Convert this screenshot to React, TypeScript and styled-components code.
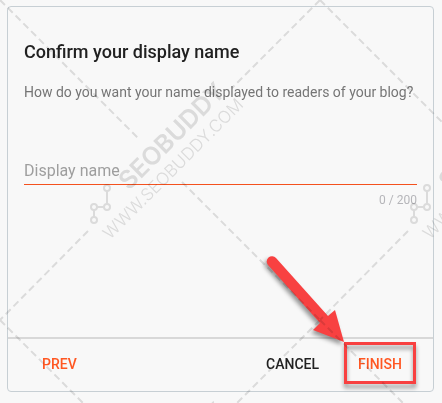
import React, { useState } from 'react';
import styled, { createGlobalStyle } from 'styled-components';

const GlobalStyle = createGlobalStyle`
  *, *::before, *::after { box-sizing: border-box; }
  body {
    margin: 0;
    background: #f8f8f8;
    font-family: Roboto, "Liberation Sans", sans-serif;
  }
`;

const Page = styled.main`
  position: relative;
  display: flex;
  min-height: 100vh;
  padding: 6px 8px 11px 7px;
  overflow: hidden;
`;

const Card = styled.form`
  display: flex;
  flex: 1;
  flex-direction: column;
  border: 1px solid #c7cfd4;
  border-radius: 4px;
`;

const Content = styled.div`
  flex: 1;
  padding: 32px 16px;
`;

const Title = styled.h1`
  margin: 0;
  color: #212121;
  font-size: 18px;
  font-weight: 500;
  line-height: 26px;
`;

const Prompt = styled.p`
  margin: 17px 0 0;
  color: #757575;
  font-size: 14px;
  line-height: 20px;
`;

const Field = styled.div`
  margin-top: 55px;
`;

const NameInput = styled.input`
  display: block;
  width: 100%;
  height: 28px;
  padding: 0;
  border: 0;
  border-bottom: 1px solid #f4511e;
  border-radius: 0;
  outline: none;
  background: transparent;
  color: #212121;
  font: 400 16px/24px Roboto, "Liberation Sans", sans-serif;

  &::placeholder { color: #9e9e9e; opacity: 1; }
`;

const Counter = styled.div`
  margin-top: 7px;
  color: #b5b5b9;
  font-size: 12px;
  line-height: 16px;
  text-align: right;
`;

const Footer = styled.footer`
  display: flex;
  align-items: flex-start;
  height: 54px;
  padding: 3px 17px 0;
  border-top: 2px solid #d8d8d8;
`;

const Action = styled.button<{ $accent?: boolean; $compact?: boolean }>`
  position: relative;
  height: 42px;
  padding: ${({ $compact }) => ($compact ? '2px 14px 0' : '2px 17px 0')};
  border: 0;
  background: transparent;
  color: ${({ $accent }) => ($accent ? '#ff5722' : '#212121')};
  font: 500 14px/20px Roboto, "Liberation Sans", sans-serif;
  cursor: pointer;
`;

const Spacer = styled.div`
  flex: 1;
`;

const Highlight = styled.span`
  position: absolute;
  inset: 0;
  border: 3px solid #f84141;
  filter: drop-shadow(0 4px 2px rgba(0, 0, 0, 0.4));
`;

const Arrow = styled.svg`
  position: absolute;
  right: 100%;
  bottom: 100%;
  width: 84px;
  height: 90px;
  overflow: visible;
  filter: drop-shadow(-2px 3px 2px rgba(0, 0, 0, 0.4));
  pointer-events: none;
`;

const FinishGroup = styled.div`
  position: relative;
  margin-left: 8px;
`;

const WatermarkLayer = styled.svg`
  position: absolute;
  inset: 0;
  width: 100%;
  height: 100%;
  color: #e2e2e2;
  mix-blend-mode: multiply;
  pointer-events: none;
`;

function Watermark() {
  return (
    <WatermarkLayer aria-hidden="true">
      <defs>
        <pattern id="brand-tile" width="320" height="320" patternUnits="userSpaceOnUse">
          <g fill="none" stroke="currentColor" strokeWidth="2">
            <path
              d="M0 0 138 138M182 182 320 320M320 0 232 88M88 231 0 320"
              strokeDasharray="7 4"
            />
            <path d="M94 217V210M97 207H104M107 204V191" />
            <circle cx="94" cy="220" r="3" />
            <circle cx="94" cy="207" r="3" />
            <circle cx="107" cy="207" r="3" />
            <circle cx="107" cy="188" r="3" />
          </g>
          <g fill="currentColor" fontFamily="Inter, sans-serif">
            <text x="129" y="191" fontSize="25" fontWeight="600" transform="rotate(-45 129 191)">
              SEOBUDDY
            </text>
            <text x="110" y="240" fontSize="17" fontWeight="300" transform="rotate(-45 110 240)">
              WWW.SEOBUDDY.COM
            </text>
          </g>
        </pattern>
      </defs>
      <rect width="100%" height="100%" fill="url(#brand-tile)" />
    </WatermarkLayer>
  );
}

export default function App() {
  const [name, setName] = useState('');

  return (
    <>
      <GlobalStyle />
      <Page>
        <Card onSubmit={(event) => event.preventDefault()}>
          <Content>
            <Title>Confirm your display name</Title>
            <Prompt>How do you want your name displayed to readers of your blog?</Prompt>
            <Field>
              <NameInput
                type="text"
                aria-label="Display name"
                placeholder="Display name"
                maxLength={200}
                value={name}
                onChange={(event) => setName(event.target.value)}
              />
              <Counter>{name.length} / 200</Counter>
            </Field>
          </Content>
          <Footer>
            <Action type="button" $accent>PREV</Action>
            <Spacer />
            <Action type="button">CANCEL</Action>
            <FinishGroup>
              <Action type="submit" $accent $compact>
                FINISH
                <Highlight />
              </Action>
              <Arrow viewBox="0 0 84 90" aria-hidden="true">
                <path
                  d="M8 13a5 5 0 0 1 8-7L68 64l7-6 9 32-31-12 7-7Z"
                  fill="#f84141"
                />
              </Arrow>
            </FinishGroup>
          </Footer>
        </Card>
        <Watermark />
      </Page>
    </>
  );
}
